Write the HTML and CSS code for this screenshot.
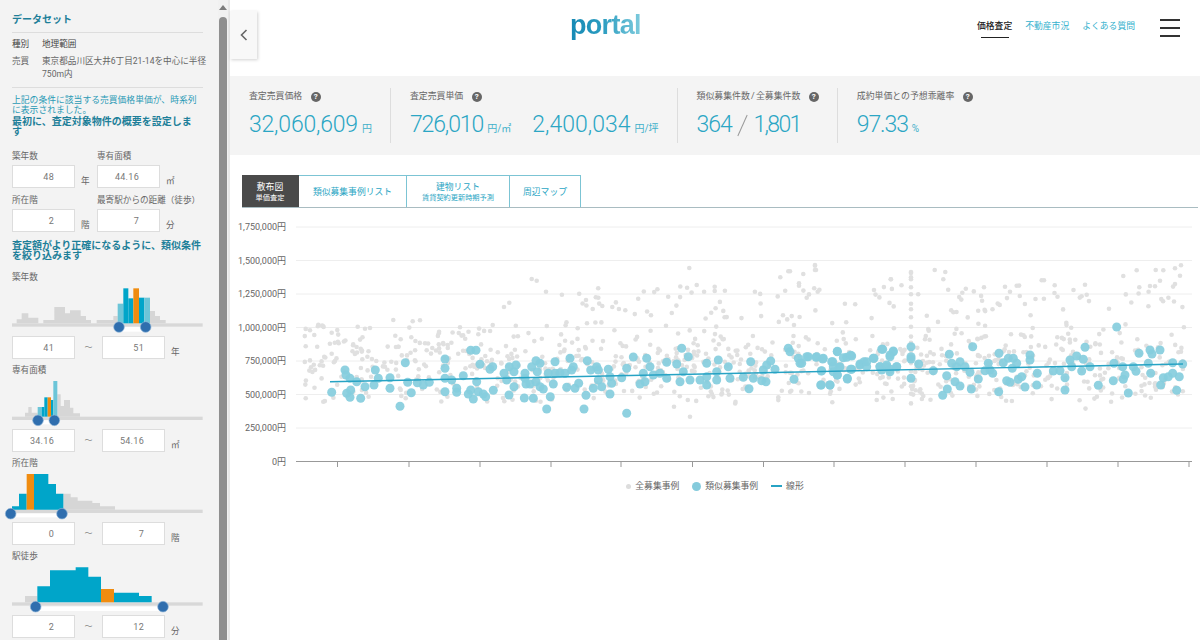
FILE: index.html
```html
<!DOCTYPE html>
<html lang="ja">
<head>
    <meta charset="UTF-8">
    <meta name="viewport" content="width=device-width, initial-scale=1.0">
    <title>portal 価格査定</title>
    <link rel="stylesheet" href="styles.css">
</head>
<body>
    <aside class="sidebar">
        <h2 class="dataset-title">データセット</h2>
        <dl class="dataset">
            <dt class="strong">種別</dt><dd class="strong">地理範囲</dd>
            <dt>売買</dt><dd>東京都品川区大井6丁目21-14を中心に半径750m内</dd>
        </dl>
        <p class="note">上記の条件に該当する売買価格単価が、時系列に表示されました。</p>
        <h3 class="lead">最初に、査定対象物件の概要を設定しま<br>す</h3>

        <div class="field-grid first">
            <div class="field">
                <label>築年数</label>
                <div class="field-row"><input type="text" value="48"><span class="unit">年</span></div>
            </div>
            <div class="field">
                <label>専有面積</label>
                <div class="field-row"><input type="text" value="44.16"><span class="unit">㎡</span></div>
            </div>
        </div>
        <div class="field-grid">
            <div class="field">
                <label>所在階</label>
                <div class="field-row"><input type="text" value="2"><span class="unit">階</span></div>
            </div>
            <div class="field">
                <label>最寄駅からの距離（徒歩）</label>
                <div class="field-row"><input type="text" value="7"><span class="unit">分</span></div>
            </div>
        </div>

        <h3 class="lead second">査定額がより正確になるように、類似条件を絞り込みます</h3>

        <div class="range range-tall">
            <label>築年数</label>
            <svg width="205" height="52" viewBox="0 0 615 156">
                <rect class="track" x="36" y="118" width="572" height="10"/>
                <path class="bar-grey" d="M50 118V106H65V88H85V101H115V118H130V108H163V69H195V88H210V79H242V96H258V108H273V118H290V108H340V96H353V118ZM450 118V81H465V96H480V108H497V118Z"/>
                <rect class="bar-light" x="353" y="59" width="17" height="59"/>
                <rect class="bar-blue" x="370" y="13" width="15" height="105"/>
                <rect class="bar-blue" x="385" y="43" width="15" height="75"/>
                <rect class="bar-orange" x="400" y="13" width="17" height="105"/>
                <rect class="bar-blue" x="417" y="41" width="16" height="77"/>
                <rect class="bar-light" x="433" y="41" width="17" height="77"/>
                <rect class="picked" x="357" y="129" width="80" height="14"/>
                <circle class="handle" cx="357" cy="129" r="16"/>
                <circle class="handle" cx="437" cy="129" r="16"/>
            </svg>
            <div class="range-inputs">
                <input type="text" value="41"><span class="tilde">〜</span><input type="text" value="51"><span class="unit">年</span>
            </div>
        </div>

        <div class="range">
            <label>専有面積</label>
            <svg width="205" height="46" viewBox="0 0 615 138">
                <rect class="track" x="36" y="110" width="572" height="10"/>
                <path class="bar-grey" d="M75 110V98H85V81H95V98H113V110ZM172 110V43H182V78H192V60H210V83H220V100H240V110Z"/>
                <rect class="bar-light" x="113" y="81" width="12" height="29"/>
                <rect class="bar-blue" x="125" y="81" width="8" height="29"/>
                <rect class="bar-blue" x="133" y="52" width="10" height="58"/>
                <rect class="bar-orange" x="143" y="52" width="10" height="58"/>
                <rect class="bar-blue" x="153" y="60" width="7" height="50"/>
                <rect class="bar-light" x="160" y="3" width="12" height="107"/>
                <rect class="picked" x="114" y="121" width="49" height="12"/>
                <circle class="handle" cx="114" cy="121" r="16"/>
                <circle class="handle" cx="163" cy="121" r="16"/>
            </svg>
            <div class="range-inputs">
                <input type="text" value="34.16"><span class="tilde">〜</span><input type="text" value="54.16"><span class="unit">㎡</span>
            </div>
        </div>

        <div class="range">
            <label>所在階</label>
            <svg width="205" height="46" viewBox="0 0 615 138">
                <rect class="track" x="36" y="110" width="572" height="10"/>
                <path class="bar-grey" d="M190 110V62H212V73H233V83H277V90H300V100H345V110Z"/>
                <path class="bar-blue" d="M36 110V100H57V62H80V110ZM102 110V3H145V33H168V62H190V110Z"/>
                <rect class="bar-orange" x="80" y="3" width="22" height="107"/>
                <rect class="picked" x="32" y="122" width="154" height="11"/>
                <circle class="handle" cx="32" cy="122" r="16"/>
                <circle class="handle" cx="186" cy="122" r="16"/>
            </svg>
            <div class="range-inputs">
                <input type="text" value="0"><span class="tilde">〜</span><input type="text" value="7"><span class="unit">階</span>
            </div>
        </div>

        <div class="range">
            <label>駅徒歩</label>
            <svg width="205" height="46" viewBox="0 0 615 138">
                <rect class="track" x="36" y="109" width="572" height="10"/>
                <path class="bar-grey" d="M75 109V90H112V109Z"/>
                <path class="bar-blue" d="M112 109V61H150V13H227V4H265V32H303V109ZM342 109V80H417V90H455V109Z"/>
                <rect class="bar-orange" x="303" y="69" width="39" height="40"/>
                <rect class="picked" x="107" y="122" width="382" height="13"/>
                <circle class="handle" cx="107" cy="122" r="16"/>
                <circle class="handle" cx="489" cy="122" r="16"/>
            </svg>
            <div class="range-inputs">
                <input type="text" value="2"><span class="tilde">〜</span><input type="text" value="12"><span class="unit">分</span>
            </div>
        </div>
    </aside>

    <div class="scrollbar">
        <span class="scroll-arrow"></span>
        <span class="scroll-thumb"></span>
    </div>

    <main class="main">
        <button class="toggle" type="button" aria-label="閉じる">
            <svg width="8" height="12" viewBox="0 0 8 12"><path d="M6.5 1L1.5 6l5 5" fill="none" stroke="#666" stroke-width="1.6"/></svg>
        </button>

        <header class="header">
            <div class="logo">portal</div>
            <nav class="nav">
                <a class="nav-link active" href="#">価格査定</a>
                <a class="nav-link" href="#">不動産市況</a>
                <a class="nav-link" href="#">よくある質問</a>
            </nav>
            <div class="burger"><span></span><span></span><span></span></div>
        </header>

        <section class="stats">
            <div class="stat">
                <div class="stat-label">査定売買価格<i class="help">?</i></div>
                <div class="stat-value">32,060,609<small>円</small></div>
            </div>
            <div class="stat">
                <div class="stat-label">査定売買単価<i class="help">?</i></div>
                <div class="stat-value"><span class="tight">726,010</span><small>円/㎡</small><span class="next-value">2,400,034</span><small>円/坪</small></div>
            </div>
            <div class="stat">
                <div class="stat-label">類似募集件数 / 全募集件数<i class="help">?</i></div>
                <div class="stat-value"><span class="tight">364</span><span class="slash"></span><span class="tighter">1,801</span></div>
            </div>
            <div class="stat">
                <div class="stat-label">成約単価との予想乖離率<i class="help">?</i></div>
                <div class="stat-value"><span class="tight">97.33</span><small>%</small></div>
            </div>
        </section>

        <div class="tabs">
            <a class="tab active" href="#">敷布図<small>単価査定</small></a>
            <a class="tab tab-list" href="#">類似募集事例リスト</a>
            <a class="tab tab-building" href="#">建物リスト<small>賃貸契約更新時期予測</small></a>
            <a class="tab tab-map" href="#">周辺マップ</a>
        </div>

        <svg id="chart" class="chart" width="970" height="262" viewBox="230 215 970 262"></svg>

        <div class="legend">
            <span class="legend-dot small"></span><span class="legend-text">全募集事例</span>
            <span class="legend-dot"></span><span class="legend-text">類似募集事例</span>
            <span class="legend-line"></span><span>線形</span>
        </div>
    </main>

    <script src="chart.js"></script>
</body>
</html>
```

FILE: styles.css
```css
* {
    box-sizing: border-box;
}
html, body {
    height: 640px;
    overflow: hidden;
}
body {
    margin: 0;
    display: flex;
    font-family: Roboto, 'Noto Sans CJK JP', sans-serif;
    color: #666;
    background-color: #fff;
}
.sidebar {
    width: 218px;
    height: 640px;
    overflow: hidden;
    flex-shrink: 0;
    padding: 14px 15px 0 12px;
    background-color: #f3f3f3;
    font-size: 8.6px;
}
.dataset-title {
    margin: 0;
    padding-bottom: 6px;
    border-bottom: 1px solid #ddd;
    font-size: 10px;
    line-height: 12px;
    color: #1d7f99;
}
.dataset {
    display: grid;
    grid-template-columns: 30px 1fr;
    margin: 0;
    padding-top: 5px;
    padding-bottom: 6px;
    border-bottom: 1px solid #ddd;
    line-height: 13px;
}
.dataset dt {
    margin-bottom: 4px;
}
.dataset dd {
    margin: 0 -5px 0 0;
}
.dataset .strong {
    color: #444;
}
.note {
    margin: 7px 0 0;
    font-size: 8.8px;
    line-height: 10px;
    color: #2a9ab5;
}
.lead {
    margin: 2px 0 0;
    font-size: 10px;
    line-height: 10px;
    color: #1d7f99;
}
.lead.second {
    margin-top: 9px;
    margin-bottom: 10px;
}
.field-grid {
    display: grid;
    grid-template-columns: 85px 1fr;
    margin-top: 6px;
}
.field-grid.first {
    margin-top: 13px;
}
.field label, .range label {
    display: block;
    line-height: 12px;
    white-space: nowrap;
}
.field-row {
    display: flex;
    margin-top: 3px;
}
input {
    width: 63px;
    height: 23px;
    padding: 0 20px 0 0;
    border: 1px solid #ddd;
    background-color: #fff;
    font-family: Roboto, sans-serif;
    font-size: 9px;
    letter-spacing: 0.3px;
    color: #777;
    text-align: right;
}
.unit {
    align-self: flex-end;
    margin-left: 6px;
    line-height: 14px;
    font-size: 8.6px;
}
.range {
    margin-top: 5px;
}
.range svg {
    display: block;
    margin: 4px 0 0 -12px;
    overflow: visible;
}
.range-tall svg {
    margin-top: 1px;
}
.range-inputs {
    display: flex;
    margin-top: 3px;
}
.range-tall .range-inputs {
    margin-top: 0;
}
.tilde {
    width: 27px;
    line-height: 23px;
    text-align: center;
    font-size: 8px;
    color: #888;
}
.track {
    fill: #d8d8d8;
}
.bar-grey {
    fill: #d6d6d6;
}
.bar-light {
    fill: #6cc5d8;
}
.bar-blue {
    fill: #00a5c9;
}
.bar-orange {
    fill: #f08c10;
}
.picked {
    fill: #fff;
}
.handle {
    fill: #2f6eae;
    stroke: #8fb5d8;
    stroke-width: 2;
}
.scrollbar {
    position: relative;
    width: 10px;
    height: 640px;
    flex-shrink: 0;
    background-color: #f1f1f1;
}
.scroll-arrow {
    position: absolute;
    top: 5px;
    left: 1px;
    border-left: 4px solid transparent;
    border-right: 4px solid transparent;
    border-bottom: 5px solid #7c7c7c;
}
.scroll-thumb {
    position: absolute;
    top: 17px;
    bottom: 0;
    left: 1px;
    width: 8px;
    border-radius: 4px 4px 0 0;
    background-color: #8f8f8f;
}
.main {
    position: relative;
    flex: 1;
    min-width: 0;
    border-left: 2px solid #e8e8e8;
}
.toggle {
    position: absolute;
    top: 11px;
    left: 0;
    display: flex;
    align-items: center;
    justify-content: center;
    width: 27px;
    height: 48px;
    padding: 0;
    border: 0;
    background-color: #f8f8f8;
    box-shadow: 1px 1px 3px rgba(0, 0, 0, 0.18);
}
.header {
    display: flex;
    align-items: flex-start;
    height: 76px;
    padding-left: 340px;
}
.logo {
    margin-top: 8px;
    font-family: 'Liberation Sans', sans-serif;
    font-size: 27px;
    line-height: 34px;
    font-weight: bold;
    letter-spacing: -0.7px;
    background: linear-gradient(90deg, #1689b4, #2a9cc0 45%, #7ecbdd);
    -webkit-background-clip: text;
    background-clip: text;
    color: transparent;
}
.nav {
    display: flex;
    gap: 13px;
    margin-left: auto;
    margin-top: 19px;
}
.nav-link {
    position: relative;
    font-size: 8.8px;
    line-height: 14px;
    color: #35b1cd;
    text-decoration: none;
    white-space: nowrap;
}
.nav-link.active {
    color: #222;
    font-weight: 500;
}
.nav-link.active::after {
    content: "";
    position: absolute;
    left: 4px;
    right: 3px;
    top: 18px;
    height: 1px;
    background-color: #222;
}
.burger {
    display: flex;
    flex-direction: column;
    gap: 6.5px;
    width: 20px;
    margin: 19px 20px 0 25px;
}
.burger span {
    height: 1.5px;
    background-color: #333;
}
.stats {
    display: flex;
    height: 79px;
    padding: 12px 0 0;
    background-color: #f4f4f4;
}
.stat {
    height: 55px;
    padding: 0 18px 0 19px;
    border-right: 1px solid #ddd;
}
.stat:last-child {
    border-right: 0;
}
.stat-label {
    display: flex;
    align-items: center;
    font-size: 8.9px;
    line-height: 16px;
    word-spacing: -1px;
    color: #666;
    white-space: nowrap;
}
.help {
    display: inline-block;
    width: 10px;
    height: 10px;
    margin: 1px 0 0 8.5px;
    border-radius: 50%;
    background-color: #666;
    color: #fff;
    font-style: normal;
    font-weight: bold;
    font-size: 8px;
    line-height: 10px;
    text-align: center;
}
.stat-value {
    display: flex;
    align-items: baseline;
    margin-top: 7px;
    font-size: 23px;
    line-height: 28px;
    font-weight: 300;
    letter-spacing: -0.2px;
    color: #2ba6c4;
    white-space: nowrap;
}
.stat-value small {
    margin-left: 4px;
    font-size: 10px;
    font-weight: 400;
    letter-spacing: 0;
    color: #3fb0ca;
}
.tight {
    letter-spacing: -1.1px;
}
.tighter {
    letter-spacing: -1.7px;
}
.next-value {
    margin-left: 21px;
    letter-spacing: 0;
}
.slash {
    align-self: center;
    width: 1px;
    height: 23px;
    margin: 0 11px 0 10px;
    background-color: #999;
    transform: rotate(24deg);
}
.tabs {
    display: flex;
    height: 33px;
    margin: 20px 2px 0 12px;
    border-bottom: 1px solid #a9bcc1;
}
.tab {
    display: flex;
    flex-direction: column;
    align-items: center;
    justify-content: center;
    height: 32px;
    border: 1.5px solid #7cc4d4;
    border-bottom: 0;
    border-left: 0;
    font-size: 8.8px;
    line-height: 12px;
    color: #2ba6c4;
    text-decoration: none;
}
.tab small {
    font-size: 7.2px;
    line-height: 10px;
}
.tab.active {
    width: 57px;
    border-color: #4a4a4a;
    background-color: #4a4a4a;
    color: #fff;
}
.tab-list {
    width: 108px;
}
.tab-building {
    width: 103px;
}
.tab-map {
    width: 71px;
}
.chart {
    display: block;
    margin-top: 7px;
}
.chart text {
    font-family: Roboto, 'Noto Sans CJK JP', sans-serif;
    font-size: 9px;
    fill: #666;
    text-anchor: end;
}
.legend {
    display: flex;
    align-items: center;
    justify-content: center;
    margin-top: 3px;
    font-size: 8.8px;
    line-height: 12px;
    color: #666;
}
.legend-dot {
    width: 9px;
    height: 9px;
    margin-right: 4px;
    border-radius: 50%;
    background-color: #85cbdc;
}
.legend-dot.small {
    width: 5px;
    height: 5px;
    background-color: #ddd;
}
.legend-text {
    margin-right: 13px;
}
.legend-line {
    width: 11px;
    height: 2px;
    margin-right: 4px;
    background-color: #27a3c4;
}
```

FILE: chart.js
```js
const chart = document.getElementById('chart');
const NS = 'http://www.w3.org/2000/svg';

function add(tag, attrs, text) {
    const el = document.createElementNS(NS, tag);
    for (const k in attrs) el.setAttribute(k, attrs[k]);
    if (text) el.textContent = text;
    chart.appendChild(el);
}

// y axis
const labels = ['1,750,000円', '1,500,000円', '1,250,000円', '1,000,000円', '750,000円', '500,000円', '250,000円'];
labels.forEach((label, i) => {
    const y = 227 + i * 33.5;
    add('line', { x1: 296, x2: 1192, y1: y, y2: y, stroke: '#eee', 'stroke-width': 1 });
    add('text', { x: 286, y: y + 3 }, label);
});
add('text', { x: 286, y: 465 }, '0円');
add('line', { x1: 296, x2: 1192, y1: 461.5, y2: 461.5, stroke: '#999', 'stroke-width': 1 });
[337.5, 409, 480, 551, 621, 692.5, 763.5, 834, 905, 976, 1047, 1118, 1189].forEach(x => {
    add('line', { x1: x, x2: x, y1: 461, y2: 467, stroke: '#999', 'stroke-width': 1 });
});

// grey points: fixed outliers + seeded filler
let seed = 20240;
function rnd() {
    seed = (seed + 0x6D2B79F5) | 0;
    let t = Math.imul(seed ^ (seed >>> 15), 1 | seed);
    t = (t + Math.imul(t ^ (t >>> 7), 61 | t)) ^ t;
    return ((t ^ (t >>> 14)) >>> 0) / 4294967296;
}

const grey = [];
[[905,207],[920,212],[948,245],[1068,270],[822,291],[838,278],[1088,297],[1117,288],[1147,291],[490,330],[548,334],[570,331],[265,344],[240,361],[383,350],[405,356],[690,352],[788,345]]
    .forEach(p => grey.push([p[0] / 3 + 230, p[1] / 3 + 210]));
[[45,165],[45,180],[333,189],[333,208],[404,180],[436,186],[430,208],[970,198],[1010,181],[1067,180],[1090,181],[1125,175],[1143,166],[1140,197],[1080,212],[1125,222],[855,224],[725,211],[732,211],[272,208],[222,240],[650,227],[615,230],[630,245],[552,232],[487,248],[1018,232],[1050,228],[1065,229]]
    .forEach(p => grey.push([p[0] / 3 + 800, p[1] / 3 + 210]));
[[268,54],[290,105],[344,110],[344,123],[565,64],[570,64],[645,47],[648,60],[610,72],[541,82],[597,100],[597,107],[653,125],[873,88],[222,470],[270,500]]
    .forEach(p => grey.push([p[0] / 3 + 600, p[1] / 3 + 250]));

for (let i = 0; i < 950; i++) {
    const x = 304 + rnd() * 880;
    const top = x < 560 ? 325 : 285;
    let y;
    if (rnd() < 0.45) {
        y = 366 + (rnd() + rnd() + rnd() - 1.5) * 30;
    } else {
        y = top + rnd() * (402 - top);
    }
    grey.push([x, y]);
}
// the column of points near x=911
for (let y = 272; y < 408; y += 5 + rnd() * 5) grey.push([911, y]);

grey.forEach(p => add('circle', { cx: p[0].toFixed(1), cy: p[1].toFixed(1), r: 2.3, fill: '#e0e0e0' }));

// teal points
const teal = [];
[[305,547],[345,480],[348,495],[360,505],[380,515],[350,550],[362,540],[360,562],[392,565],[405,530],[432,525],[436,480],[445,505],[480,503],[480,535],[510,589],[526,458],[533,517],[544,548],[562,518],[580,525],[598,517],[645,447],[645,475],[645,505],[665,510],[645,545],[680,535],[680,547],[700,497],[715,552],[722,421],[738,421],[722,540],[730,567],[745,545],[740,515],[750,463],[760,552],[767,560],[780,478],[788,470],[790,541],[822,490],[830,510],[838,470],[837,555],[852,530],[852,485],[858,465],[883,564],[910,565],[885,490],[885,505],[888,522],[900,522],[905,470],[918,452],[922,485],[930,460],[918,515],[930,530],[940,537],[950,597],[961,560],[955,490],[975,455],[970,522],[975,490],[990,488],[1005,490],[1010,532],[1020,445],[1025,480],[1030,470],[1035,535],[1046,520],[1062,597],[1068,556],[1072,452],[1082,480],[1090,535],[1100,470],[1105,480],[1105,510],[1115,530],[1135,478],[1140,500],[1140,552],[1145,520],[1175,503],[1190,610],[1190,475]]
    .forEach(p => teal.push([p[0] / 3 + 230, p[1] / 3 + 210]));
[[100,321],[120,402],[135,395],[140,325],[150,350],[130,370],[160,375],[180,370],[200,385],[200,337],[230,342],[240,395],[245,295],[265,320],[250,365],[270,390],[300,390],[320,405],[320,340],[320,380],[350,390],[355,330],[350,365],[385,350],[390,385],[430,382],[452,335],[447,416],[460,385],[485,392],[498,395],[490,360],[500,345],[512,333],[525,358],[565,295],[570,305],[582,388],[595,325],[605,340],[625,320],[650,320],[670,325],[662,405],[690,405],[665,362],[695,335],[700,365],[712,305],[712,375],[720,350],[740,322],[755,318],[742,385],[755,358],[780,345],[800,335],[820,325],[848,298],[870,315],[880,303],[840,350],[860,350],[870,365],[890,350]]
    .forEach(p => teal.push([p[0] / 3 + 600, p[1] / 3 + 250]));
[[0,460],[20,440],[48,442],[68,447],[64,483],[64,525],[90,525],[98,455],[100,470],[112,424],[118,472],[112,495],[142,507],[130,443],[152,436],[152,478],[180,462],[192,455],[200,470],[222,445],[245,418],[240,470],[245,480],[260,465],[270,478],[280,425],[270,440],[290,470],[333,410],[333,440],[333,447],[333,505],[356,462],[400,482],[440,497],[448,433],[442,537],[428,556],[465,515],[480,528],[455,460],[470,470],[480,455],[495,470],[510,487],[514,537],[518,410],[535,507],[555,482],[565,460],[570,480],[578,490],[597,430],[596,545],[610,458],[625,445],[640,445],[637,475],[620,512],[630,517],[655,508],[665,500],[650,460],[675,531],[690,435],[690,450],[712,490],[710,525],[760,483],[780,482],[795,503],[795,540],[810,450],[815,470],[830,438],[845,483],[855,412],[850,448],[870,470],[895,526],[940,512],[942,460],[950,351],[968,470],[970,508],[975,495],[985,549],[1000,470],[1008,484],[1017,430],[1045,460],[1050,420],[1052,490],[1056,432],[1080,420],[1082,525],[1090,503],[1105,500],[1118,490],[1118,458],[1130,541],[1138,500],[1148,462]]
    .forEach(p => teal.push([p[0] / 3 + 800, p[1] / 3 + 210]));

teal.forEach(p => add('circle', { cx: p[0].toFixed(1), cy: p[1].toFixed(1), r: 4.5, fill: '#86cddd', 'fill-opacity': 0.92 }));

// trend line
add('line', { x1: 330, y1: 381.7, x2: 1183, y2: 364, stroke: '#27a3c4', 'stroke-width': 1.4 });
```
